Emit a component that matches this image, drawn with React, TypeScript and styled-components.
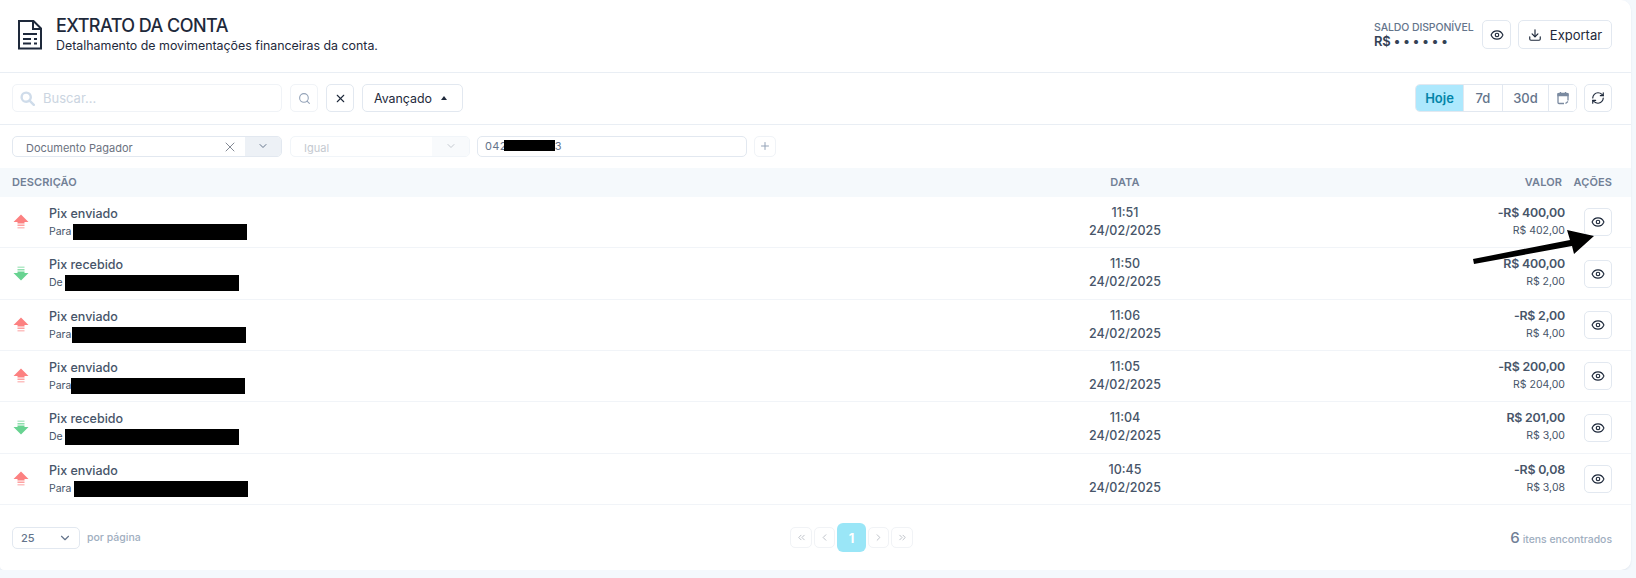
import React from 'react';
import styled, { createGlobalStyle } from 'styled-components';
import {
  ChevronDown,
  ChevronLeft,
  ChevronRight,
  ChevronsLeft,
  ChevronsRight,
  Download,
  Eye,
  Plus,
  RefreshCw,
  Search,
  X,
} from 'lucide-react';

const GlobalStyle = createGlobalStyle`
  html, body {
    margin: 0;
    padding: 0;
    background: #f4f8fc;
    font-family: Inter, "Liberation Sans", sans-serif;
    color: #1e293b;
  }
  * { box-sizing: border-box; }
`;

const Card = styled.div`
  position: relative;
  width: 1631px;
  height: 570px;
  background: #fff;
  border-radius: 0 10px 10px 4px;
  box-shadow: 0 1px 2px rgba(148, 163, 184, 0.2);
  overflow: hidden;
`;

const Header = styled.header`
  height: 73px;
  display: flex;
  align-items: center;
  padding: 0 19px 3px 18px;
  border-bottom: 1px solid #e9eef4;
`;

const TitleBlock = styled.div`
  margin-left: 14px;
  flex: 1;
  padding-bottom: 1px;
`;

const Title = styled.h1`
  margin: 0;
  font-size: 18px;
  line-height: 22px;
  font-weight: 500;
  letter-spacing: -0.55px;
  color: #1e293b;
`;

const Subtitle = styled.p`
  margin: 1px 0 0;
  font-size: 12.4px;
  line-height: 16px;
  color: #1e293b;
`;

const Balance = styled.div`
  display: flex;
  flex-direction: column;
  margin-right: 8px;
  width: 100px;
`;

const BalanceLabel = styled.span`
  font-size: 10.5px;
  line-height: 13px;
  font-weight: 500;
  letter-spacing: -0.1px;
  white-space: nowrap;
  color: #64748b;
`;

const BalanceValue = styled.span`
  font-size: 13px;
  line-height: 15px;
  font-weight: 600;
  color: #334155;
  letter-spacing: -0.2px;
`;

const BalanceDots = styled.span`
  letter-spacing: 3px;
`;

const IconButton = styled.button<{ $size?: number; $faded?: boolean }>`
  width: ${({ $size }) => $size ?? 28}px;
  height: ${({ $size }) => $size ?? 28}px;
  padding: 0;
  display: inline-flex;
  align-items: center;
  justify-content: center;
  background: #fff;
  border: 1px solid ${({ $faded }) => ($faded ? '#f0f3f7' : '#e2e8f0')};
  border-radius: 5px;
  color: ${({ $faded }) => ($faded ? '#94a3b8' : '#1e293b')};
  flex: none;
`;

const AddButton = styled(IconButton)`
  width: 22px;
  height: 21px;
`;

const TextButton = styled.button<{ $width: number }>`
  width: ${({ $width }) => $width}px;
  height: 28px;
  padding: 0 4px 0 0;
  display: inline-flex;
  align-items: center;
  justify-content: center;
  gap: 8px;
  background: #fff;
  border: 1px solid #e2e8f0;
  border-radius: 5px;
  font-family: inherit;
  font-size: 12.4px;
  color: #1e293b;
  flex: none;
`;

const ExportButton = styled(TextButton)`
  height: 29px;
  margin-left: 7px;
  font-size: 13px;
  padding: 0;
`;

const Toolbar = styled.div`
  height: 52px;
  display: flex;
  align-items: center;
  gap: 8px;
  padding: 0 19px 1px 12px;
  border-bottom: 1px solid #e9eef4;
`;

const SearchBox = styled.div`
  width: 270px;
  height: 28px;
  display: flex;
  align-items: center;
  gap: 8px;
  padding-left: 7px;
  border: 1px solid #f0f3f7;
  border-radius: 5px;
  font-size: 13px;
  color: #cbd5e1;
`;

const Spacer = styled.div`
  flex: 1;
`;

const TriangleUp = styled.span`
  width: 0;
  height: 0;
  margin-left: 1px;
  border-left: 3.5px solid transparent;
  border-right: 3.5px solid transparent;
  border-bottom: 4px solid #1e293b;
`;

const RangeGroup = styled.div`
  display: flex;
  height: 28px;
  margin-right: -1px;
  border: 1px solid #e2e8f0;
  border-radius: 5px;
  overflow: hidden;
`;

const RangeItem = styled.div<{ $active?: boolean; $width: number }>`
  width: ${({ $width }) => $width}px;
  display: flex;
  align-items: center;
  justify-content: center;
  font-size: 13px;
  font-weight: ${({ $active }) => ($active ? 600 : 500)};
  color: ${({ $active }) => ($active ? '#0284a8' : '#64748b')};
  background: ${({ $active }) => ($active ? '#ade8fd' : '#fff')};
  border-right: 1px solid #e2e8f0;

  &:last-child {
    border-right: none;
  }
`;

const FilterRow = styled.div`
  height: 43px;
  display: flex;
  align-items: center;
  padding: 0 12px 1px;
`;

const SelectBox = styled.div<{ $width: number; $disabled?: boolean }>`
  width: ${({ $width }) => $width}px;
  height: 21px;
  margin-right: 8px;
  display: flex;
  align-items: center;
  border: 1px solid ${({ $disabled }) => ($disabled ? '#f1f5f9' : '#e2e8f0')};
  border-radius: 5px;
  overflow: hidden;
  font-size: 11px;
  color: ${({ $disabled }) => ($disabled ? '#c4c9d0' : '#6b7280')};
`;

const SelectLabel = styled.span`
  flex: 1;
  padding: 3px 0 0 13px;
`;

const ClearIcon = styled.span`
  display: flex;
  margin: 2px 7px 0 0;
  color: #6b7280;
`;

const SelectArrow = styled.span<{ $disabled?: boolean; $width: number }>`
  width: ${({ $width }) => $width}px;
  height: 100%;
  display: flex;
  align-items: center;
  justify-content: center;
  background: ${({ $disabled }) => ($disabled ? '#f8fafc' : '#edf1f6')};
  color: ${({ $disabled }) => ($disabled ? '#c4c9d0' : '#64748b')};
`;

const ValueInput = styled.div`
  width: 270px;
  height: 21px;
  margin: 0 7px 0 -1px;
  display: flex;
  align-items: center;
  padding: 0 0 1px 7px;
  border: 1px solid #e2e8f0;
  border-radius: 5px;
  font-size: 11px;
  color: #64748b;
  letter-spacing: 0.3px;
`;

const InputRedaction = styled.span`
  width: 51px;
  height: 11px;
  margin: 0 0 0 -3px;
  background: #000;
`;

const Grid = styled.div`
  display: grid;
  grid-template-columns: 1fr 200px 340px 47px;
  align-items: center;
  padding: 0 19px 0 12px;
`;

const TableHead = styled(Grid)`
  height: 29px;
  padding-bottom: 1px;
  background: #f5f9fc;
  font-size: 11px;
  font-weight: 600;
  color: #718096;
  letter-spacing: 0.1px;
`;

const HeadDate = styled.span`
  text-align: center;
`;

const HeadValue = styled.span`
  text-align: right;
  padding-right: 3px;
`;

const HeadActions = styled.span`
  text-align: right;
  white-space: nowrap;
`;

const Row = styled(Grid)<{ $height: number }>`
  height: ${({ $height }) => $height}px;
  border-bottom: 1px solid #f1f4f8;
`;

const TextCell = styled.div`
  align-self: start;
  margin-top: 7px;
`;

const DescCell = styled(TextCell)`
  display: flex;
  align-items: center;
  padding-left: 1px;
  gap: 20px;
`;

const DescText = styled.div`
  display: flex;
  flex-direction: column;
`;

const RowTitle = styled.span`
  font-size: 12.5px;
  line-height: 19px;
  font-weight: 500;
  color: #475569;
`;

const RowSub = styled.span`
  display: flex;
  align-items: center;
  height: 17px;
  font-size: 10.5px;
  color: #475569;
`;

const Redaction = styled.span<{ $gap: number }>`
  width: 174px;
  height: 16px;
  margin-left: ${({ $gap }) => $gap}px;
  background: #000;
`;

const DateCell = styled(TextCell)`
  display: flex;
  flex-direction: column;
  align-items: center;
  font-size: 12.5px;
  line-height: 18px;
  font-weight: 500;
  color: #475569;
`;

const ValueCell = styled(TextCell)`
  display: flex;
  flex-direction: column;
  align-items: flex-end;
`;

const Amount = styled.span`
  font-size: 12.4px;
  line-height: 18px;
  font-weight: 600;
  color: #475569;
  letter-spacing: -0.2px;
`;

const Fee = styled.span`
  font-size: 10.5px;
  line-height: 18px;
  color: #475569;
`;

const ActionCell = styled.div`
  display: flex;
  justify-content: flex-end;
`;

const Footer = styled.div`
  height: 65px;
  display: grid;
  grid-template-columns: 778px auto 1fr;
  align-items: center;
  padding: 0 19px 0 12px;
`;

const PerPage = styled.div`
  display: flex;
  align-items: center;
  gap: 7px;
  font-size: 10.5px;
  font-weight: 500;
  color: #a0aec0;
`;

const PerPageSelect = styled.div`
  width: 68px;
  height: 22px;
  display: flex;
  align-items: center;
  justify-content: space-between;
  padding: 0 7px 0 8px;
  border: 1px solid #e2e8f0;
  border-radius: 5px;
  font-size: 11px;
  color: #64748b;
`;

const Pager = styled.div`
  display: flex;
  align-items: center;
  gap: 2px;
`;

const PageArrow = styled.span<{ $width: number }>`
  width: ${({ $width }) => $width}px;
  height: 21px;
  display: flex;
  align-items: center;
  justify-content: center;
  border: 1px solid #f1f3f6;
  border-radius: 5px;
  color: #b8bcc4;
`;

const PageCurrent = styled.span`
  width: 29px;
  height: 29px;
  display: flex;
  align-items: center;
  justify-content: center;
  background: #9ae6f7;
  border-radius: 6px;
  color: #fff;
  font-size: 13px;
  font-weight: 700;
`;

const Found = styled.div`
  display: flex;
  align-items: baseline;
  justify-content: flex-end;
  gap: 3px;
  font-size: 10.4px;
  font-weight: 500;
  color: #a0aec0;
`;

const FoundCount = styled.span`
  font-size: 15px;
  color: #718096;
`;

const Pointer = styled.svg`
  position: absolute;
  left: 1470px;
  top: 226px;
  pointer-events: none;
`;

const DocIcon = () => (
  <svg width="24" height="30" viewBox="0 0 24 30" fill="none" stroke="#1e293b" strokeWidth="2">
    <path d="M1 1h14.5L23 8.5V28.5H1Z" strokeLinejoin="miter" />
    <path d="M15 1v8h8" />
    <path d="M5 14h14M5 19h8M16 19h3M5 23.5h8M16 23.5h3" />
  </svg>
);

const CalendarIcon = () => (
  <svg width="14" height="14" viewBox="0 0 14 14" fill="none" stroke="#7b8aa0" strokeWidth="1.3">
    <path d="M8 12.5H3a1 1 0 0 1-1-1V3.5a1 1 0 0 1 1-1h8a1 1 0 0 1 1 1v6" />
    <path d="M2 3h10v1.6H2Z" fill="#7b8aa0" />
    <path d="M4.5 1v2M9.5 1v2" />
    <path d="M9.5 12.5 12 10.5" />
  </svg>
);

const SolidSearch = () => (
  <svg width="15" height="15" viewBox="0 0 15 15" fill="none" stroke="#cfdcea" strokeWidth="2.4">
    <circle cx="6.2" cy="6.2" r="4.6" />
    <path d="M9.8 9.8 13.8 13.8" strokeLinecap="round" />
  </svg>
);

const FlowArrow = ({ direction }: { direction: 'up' | 'down' }) => {
  const color = direction === 'up' ? '#fc8181' : '#68d391';
  return (
    <svg
      width="16"
      height="16"
      viewBox="0 0 16 16"
      style={direction === 'down' ? { transform: 'rotate(180deg)' } : undefined}
    >
      <path d="M8 0.5 15.5 8H11.5V9.5H4.5V8H0.5Z" fill={color} />
      <rect x="4.5" y="10.5" width="7" height="1.5" fill={color} opacity="0.75" />
      <rect x="4.5" y="13" width="7" height="1.5" fill={color} opacity="0.5" />
    </svg>
  );
};

type Movement = {
  title: string;
  prefix: string;
  gap: number;
  time: string;
  amount: string;
  fee: string;
  height: number;
  direction: 'up' | 'down';
};

const movements: Movement[] = [
  { title: 'Pix enviado', prefix: 'Para', gap: 2, time: '11:51', amount: '-R$ 400,00', fee: 'R$ 402,00', height: 51, direction: 'up' },
  { title: 'Pix recebido', prefix: 'De', gap: 2, time: '11:50', amount: 'R$ 400,00', fee: 'R$ 2,00', height: 52, direction: 'down' },
  { title: 'Pix enviado', prefix: 'Para', gap: 1, time: '11:06', amount: '-R$ 2,00', fee: 'R$ 4,00', height: 51, direction: 'up' },
  { title: 'Pix enviado', prefix: 'Para', gap: 0, time: '11:05', amount: '-R$ 200,00', fee: 'R$ 204,00', height: 51, direction: 'up' },
  { title: 'Pix recebido', prefix: 'De', gap: 2, time: '11:04', amount: 'R$ 201,00', fee: 'R$ 3,00', height: 52, direction: 'down' },
  { title: 'Pix enviado', prefix: 'Para', gap: 3, time: '10:45', amount: '-R$ 0,08', fee: 'R$ 3,08', height: 51, direction: 'up' },
];

export default function App() {
  return (
    <>
      <GlobalStyle />
      <Card>
        <Header>
          <DocIcon />
          <TitleBlock>
            <Title>EXTRATO DA CONTA</Title>
            <Subtitle>Detalhamento de movimentações financeiras da conta.</Subtitle>
          </TitleBlock>
          <Balance>
            <BalanceLabel>SALDO DISPONÍVEL</BalanceLabel>
            <BalanceValue>
              R$ <BalanceDots>••••••</BalanceDots>
            </BalanceValue>
          </Balance>
          <IconButton $size={29}>
            <Eye size={14} />
          </IconButton>
          <ExportButton $width={94}>
            <Download size={14} />
            Exportar
          </ExportButton>
        </Header>

        <Toolbar>
          <SearchBox>
            <SolidSearch />
            Buscar...
          </SearchBox>
          <IconButton $faded>
            <Search size={13} />
          </IconButton>
          <IconButton>
            <X size={13} />
          </IconButton>
          <TextButton $width={101}>
            Avançado
            <TriangleUp />
          </TextButton>
          <Spacer />
          <RangeGroup>
            <RangeItem $active $width={48}>Hoje</RangeItem>
            <RangeItem $width={39}>7d</RangeItem>
            <RangeItem $width={46}>30d</RangeItem>
            <RangeItem $width={27}>
              <CalendarIcon />
            </RangeItem>
          </RangeGroup>
          <IconButton>
            <RefreshCw size={14} />
          </IconButton>
        </Toolbar>

        <FilterRow>
          <SelectBox $width={270}>
            <SelectLabel>Documento Pagador</SelectLabel>
            <ClearIcon>
              <X size={16} strokeWidth={1.25} />
            </ClearIcon>
            <SelectArrow $width={36}>
              <ChevronDown size={12} />
            </SelectArrow>
          </SelectBox>
          <SelectBox $width={180} $disabled>
            <SelectLabel>Igual</SelectLabel>
            <SelectArrow $disabled $width={37}>
              <ChevronDown size={12} />
            </SelectArrow>
          </SelectBox>
          <ValueInput>
            042
            <InputRedaction />
            3
          </ValueInput>
          <AddButton $faded>
            <Plus size={12} />
          </AddButton>
        </FilterRow>

        <TableHead>
          <span>DESCRIÇÃO</span>
          <HeadDate>DATA</HeadDate>
          <HeadValue>VALOR</HeadValue>
          <HeadActions>AÇÕES</HeadActions>
        </TableHead>

        {movements.map((m, i) => (
          <Row key={i} $height={m.height}>
            <DescCell>
              <FlowArrow direction={m.direction} />
              <DescText>
                <RowTitle>{m.title}</RowTitle>
                <RowSub>
                  {m.prefix}
                  <Redaction $gap={m.gap} />
                </RowSub>
              </DescText>
            </DescCell>
            <DateCell>
              <span>{m.time}</span>
              <span>24/02/2025</span>
            </DateCell>
            <ValueCell>
              <Amount>{m.amount}</Amount>
              <Fee>{m.fee}</Fee>
            </ValueCell>
            <ActionCell>
              <IconButton>
                <Eye size={14} />
              </IconButton>
            </ActionCell>
          </Row>
        ))}

        <Footer>
          <PerPage>
            <PerPageSelect>
              25
              <ChevronDown size={14} />
            </PerPageSelect>
            por página
          </PerPage>
          <Pager>
            <PageArrow $width={22}><ChevronsLeft size={11} /></PageArrow>
            <PageArrow $width={21}><ChevronLeft size={11} /></PageArrow>
            <PageCurrent>1</PageCurrent>
            <PageArrow $width={21}><ChevronRight size={11} /></PageArrow>
            <PageArrow $width={22}><ChevronsRight size={11} /></PageArrow>
          </Pager>
          <Found>
            <FoundCount>6</FoundCount>
            itens encontrados
          </Found>
        </Footer>

        <Pointer width="130" height="42" viewBox="0 0 130 42">
          <path d="M3 33 100 14 97 4 124 10 104 28 102 20 4 38Z" fill="#000" />
        </Pointer>
      </Card>
    </>
  );
}
